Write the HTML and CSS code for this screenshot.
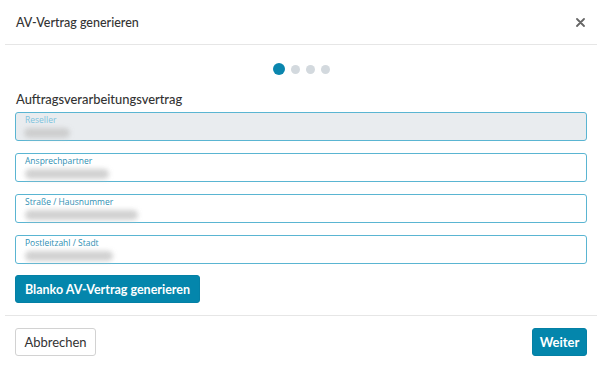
FILE: index.html
```html
<!DOCTYPE html>
<html lang="de">
<head>
<meta charset="utf-8">
<title>AV-Vertrag generieren</title>
<link rel="stylesheet" href="styles.css">
</head>
<body>
<div class="modal">
  <header class="modal-header">
    <h1 class="modal-title">AV-Vertrag generieren</h1>
    <button class="close" aria-label="Schließen">
      <svg width="9" height="9" viewBox="0 0 9 9"><path d="M1 1L8 8M8 1L1 8" stroke="#666" stroke-width="1.8" stroke-linecap="round"/></svg>
    </button>
  </header>
  <div class="modal-body">
    <div class="steps">
      <span class="dot active"></span>
      <span class="dot"></span>
      <span class="dot"></span>
      <span class="dot"></span>
    </div>
    <h2 class="section-title">Auftragsverarbeitungsvertrag</h2>
    <div class="fields">
      <div class="field disabled">
        <span class="field-label">Reseller</span>
        <span class="blur w1"></span>
      </div>
      <div class="field">
        <span class="field-label">Ansprechpartner</span>
        <span class="blur w2"></span>
      </div>
      <div class="field">
        <span class="field-label">Straße / Hausnummer</span>
        <span class="blur w3"></span>
      </div>
      <div class="field">
        <span class="field-label">Postleitzahl / Stadt</span>
        <span class="blur w4"></span>
      </div>
    </div>
    <button class="btn btn-primary btn-blank">Blanko AV-Vertrag generieren</button>
  </div>
  <footer class="modal-footer">
    <button class="btn btn-default">Abbrechen</button>
    <button class="btn btn-primary btn-next">Weiter</button>
  </footer>
</div>
</body>
</html>
```

FILE: styles.css
```css
* { box-sizing: border-box; }
html, body { margin: 0; padding: 0; background: #fff; }
body {
  font-family: "Lato", "Open Sans", sans-serif;
  color: #333;
  width: 602px;
  height: 371px;
  overflow: hidden;
}
.modal {
  padding: 0 5px;
}
.modal-header {
  height: 45px;
  display: flex;
  align-items: center;
  justify-content: space-between;
  padding: 0 12px 0 11px;
  border-bottom: 1px solid #e6e6e6;
}
.modal-title {
  margin: 0;
  font-size: 12.5px;
  font-weight: 500;
  color: #333;
}
.close {
  border: 0;
  background: none;
  padding: 0;
  width: 9px;
  height: 9px;
  display: flex;
}
.modal-body {
  padding: 0 10px;
  display: flex;
  flex-direction: column;
}
.steps {
  display: flex;
  justify-content: center;
  align-items: center;
  gap: 6px;
  margin-top: 18px;
  height: 12px;
}
.dot {
  width: 9px;
  height: 9px;
  border-radius: 50%;
  background: #d3d9de;
}
.dot.active {
  width: 12px;
  height: 12px;
  background: #0a86ae;
}
.section-title {
  margin: 15px 0 0 1px;
  font-size: 12.9px;
  font-weight: 500;
  color: #333;
  line-height: 18px;
}
.fields {
  display: flex;
  flex-direction: column;
  gap: 12px;
  margin-top: 4px;
}
.field {
  height: 29px;
  border: 1px solid #5ab5d2;
  border-radius: 3px;
  padding: 1px 0 0 9px;
  display: flex;
  flex-direction: column;
  background: #fff;
}
.field.disabled {
  background: #e9ecef;
}
.field-label {
  font-family: "Open Sans", sans-serif;
  font-size: 8.5px;
  line-height: 12px;
  color: #2f8fb3;
}
.field.disabled .field-label {
  color: #7cc2dd;
}
.blur {
  display: block;
  height: 10px;
  margin-top: 2px;
  border-radius: 5px;
  background: #c9c9c9;
  filter: blur(2.5px);
  opacity: 0.85;
}
.w1 { width: 46px; margin-left: -1px; }
.w2 { width: 84px; }
.w3 { width: 113px; }
.w4 { width: 88px; }
.btn {
  font-family: "Lato", "Open Sans", sans-serif;
  border-radius: 3px;
  height: 28px;
  padding: 0;
  font-size: 13px;
  cursor: pointer;
}
.btn-primary {
  background: #0486ac;
  border: 1px solid #0480a5;
  color: #fff;
  font-weight: 700;
}
.btn-blank {
  align-self: flex-start;
  margin-top: 11px;
  width: 185px;
  font-size: 12.5px;
}
.btn-default {
  background: #fff;
  border: 1px solid #d2d2d2;
  color: #333;
  width: 81px;
}
.btn-next {
  width: 55px;
}
.modal-footer {
  margin-top: 12px;
  border-top: 1px solid #e6e6e6;
  padding: 12px 10px 0 10px;
  display: flex;
  justify-content: space-between;
}
```
